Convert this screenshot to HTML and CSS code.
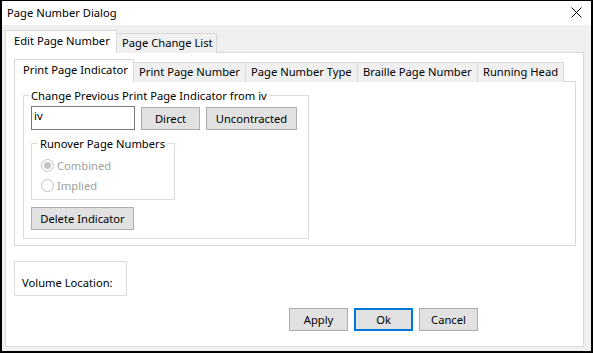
FILE: index.html
```html
<!DOCTYPE html>
<html lang="en">
<head>
  <meta charset="UTF-8" />
  <title>Page Number Dialog</title>
  <link rel="stylesheet" href="styles.css">
</head>
<body>
  <div class="window">
    <div class="titlebar">
      <span class="title">Page Number Dialog</span>
      <svg class="close" width="11" height="11" viewBox="0 0 11 11">
        <path d="M0.5 0.5 L10.5 10.5 M10.5 0.5 L0.5 10.5" stroke="#000" stroke-width="1" fill="none"/>
      </svg>
    </div>

    <div class="client">
      <div class="tabs outer-tabs">
        <div class="tab active t-edit">Edit Page Number</div>
        <div class="tab t-list">Page Change List</div>
      </div>

      <div class="panel outer-panel">
        <div class="tabs inner-tabs">
          <div class="tab active t-ind">Print Page Indicator</div>
          <div class="tab t-num">Print Page Number</div>
          <div class="tab t-type">Page Number Type</div>
          <div class="tab t-braille">Braille Page Number</div>
          <div class="tab t-head">Running Head</div>
        </div>

        <div class="panel inner-panel">
          <fieldset class="group main-group">
            <legend>Change Previous Print Page Indicator from iv</legend>
            <div class="row">
              <input class="textbox" type="text" value="iv">
              <button class="btn btn-direct">Direct</button>
              <button class="btn btn-uncontracted">Uncontracted</button>
            </div>
            <fieldset class="group runover">
              <legend>Runover Page Numbers</legend>
              <label class="radio disabled"><span class="dot checked"></span>Combined</label>
              <label class="radio disabled"><span class="dot"></span>Implied</label>
            </fieldset>
            <button class="btn btn-delete">Delete Indicator</button>
          </fieldset>
        </div>

        <div class="volume">Volume Location:</div>

        <div class="actions">
          <button class="btn">Apply</button>
          <button class="btn default">Ok</button>
          <button class="btn">Cancel</button>
        </div>
      </div>
    </div>
  </div>
</body>
</html>
```

FILE: styles.css
```css
* { box-sizing: border-box; }
body {
  margin: 0;
  font-family: "Noto Sans", "Open Sans", sans-serif;
  font-size: 11.2px;
  color: #000;
  background: #fff;
}
.window {
  width: 593px;
  height: 353px;
  border: 2px solid #000;
  border-top-width: 1px;
  background: #f0f0f0;
  overflow: hidden;
}
.titlebar {
  height: 24px;
  background: #fff;
  display: flex;
  align-items: center;
  justify-content: space-between;
  padding: 0 9px 2px 5px;
  line-height: 15px;
}
.close { display: block; }

.client { padding: 5px 0 0 3px; }

/* tabs */
.tabs {
  display: flex;
  align-items: flex-end;
  margin-bottom: -1px;
}
.tab {
  height: 20px;
  line-height: 18px;
  border: 1px solid #d9d9d9;
  border-bottom: none;
  background: #f0f0f0;
  padding-left: 5px;
  white-space: nowrap;
  margin-left: -1px;
}
.tab:first-child { margin-left: 0; }
.tab.active {
  height: 23px;
  background: #fff;
  position: relative;
  z-index: 1;
  padding-left: 8px;
  line-height: 20px;
}
.t-edit { width: 112px; }
.t-list { width: 101px; }
.t-ind { width: 120px; }
.t-num { width: 113px; }
.t-type { width: 113px; }
.t-braille { width: 121px; }
.t-head { width: 87px; }

.panel {
  background: #fff;
  border: 1px solid #d9d9d9;
}
.outer-panel {
  width: 579px;
  height: 295px;
  padding: 6px 8px 0 8px;
}
.inner-panel {
  width: 562px;
  height: 165px;
  padding: 6px 0 0 8px;
}

/* group boxes */
.group {
  margin: 0;
  border: 1px solid #dcdcdc;
  padding: 0 6px 0 7px;
}
.group legend {
  padding: 0 2px;
  margin-left: -2px;
  line-height: 15px;
  white-space: nowrap;
}
.main-group {
  width: 286px;
  height: 151px;
  padding-top: 3px;
}
.row {
  display: flex;
  align-items: flex-start;
  gap: 6px;
}
.textbox {
  width: 104px;
  height: 24px;
  border: 1px solid #7a7a7a;
  font: inherit;
  padding: 0 2px 5px;
  margin: 0;
  outline: none;
}
.btn {
  height: 23px;
  font: inherit;
  color: #000;
  background: #e1e1e1;
  border: 1px solid #adadad;
  padding: 0;
  margin: 0;
}
.row .btn { margin-top: 1px; }
.btn-direct { width: 59px; }
.btn-uncontracted { width: 91px; }
.btn-delete { width: 103px; margin-top: 7px; }

.runover {
  width: 144px;
  height: 64px;
  margin-top: 6px;
  padding: 4px 0 0 8px;
}
.radio {
  display: flex;
  align-items: center;
  height: 20px;
  color: #a0a0a0;
}
.dot {
  width: 13px;
  height: 13px;
  border: 1px solid #c4c4c4;
  border-radius: 50%;
  margin: 0 3px 0 1px;
  display: flex;
  align-items: center;
  justify-content: center;
  background: #fff;
}
.dot.checked::after {
  content: "";
  width: 7px;
  height: 7px;
  border-radius: 50%;
  background: #c4c4c4;
}

.volume {
  width: 113px;
  height: 35px;
  margin-top: 15px;
  border: 1px solid #dcdcdc;
  padding: 13px 0 0 7px;
  line-height: 15px;
}

.actions {
  display: flex;
  gap: 6px;
  margin: 12px 0 0 275px;
}
.actions .btn { width: 59px; }
.actions .btn.default {
  border: 2px solid #0078d7;
}
```
